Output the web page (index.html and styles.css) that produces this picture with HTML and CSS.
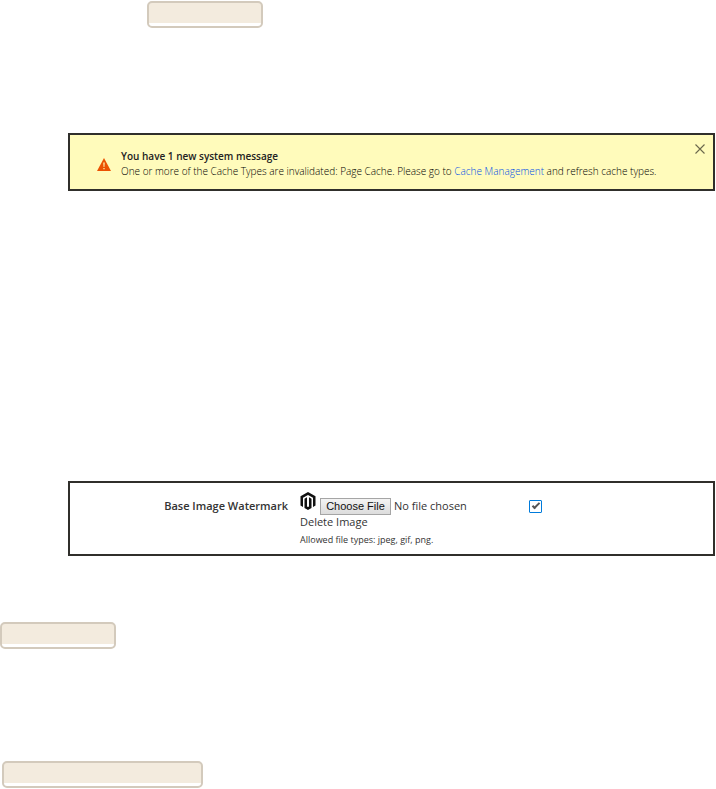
FILE: index.html
```html
<!DOCTYPE html>
<html lang="en">
<head>
	<meta charset="utf-8">
	<title>Base Image Watermark</title>
	<link rel="stylesheet" href="styles.css">
</head>
<body>
	<div class="tag tag-top"></div>

	<div class="panel message">
		<svg class="warning" viewBox="0 0 14 13">
			<path d="M7 0L14 13H0z" fill="#eb5202"/>
			<path d="M6.300 4.500h1.400l-.3 4.500h-.8zM6.400 10h1.200v1.200H6.400z" fill="#fffbbb"/>
		</svg>
		<div class="message-text">
			<strong>You have 1 new system message</strong>
			<p>One or more of the Cache Types are invalidated: Page Cache. Please go to <a href="#">Cache Management</a> and refresh cache types.</p>
		</div>
		<button class="close" type="button" aria-label="Close">
			<svg viewBox="0 0 10 10"><path d="M.5.5l9 9M9.500.5l-9 9" fill="none" stroke="#6b684c" stroke-width="1.100"/></svg>
		</button>
	</div>

	<form class="panel field">
		<label class="field-label" for="watermark">Base Image Watermark</label>
		<div class="control">
			<div class="upload">
				<svg class="logo" viewBox="0 0 16 18">
					<path d="M8 0l7.500 4.300v9.200l-2.500 1.400V5.800L8 2.900 3 5.800v9.100L.5 13.500V4.300z" fill="#111"/>
					<path d="M4.500 6.700L7 5.200v9.300l1 .6 1-.6V5.200l2.500 1.500v9.200L8 18l-3.500-2.100z" fill="#111"/>
				</svg>
				<input class="file" type="file" id="watermark">
				<input class="check" type="checkbox" id="delete" checked>
			</div>
			<label class="delete" for="delete">Delete Image</label>
			<p class="note">Allowed file types: jpeg, gif, png.</p>
		</div>
	</form>

	<div class="tag tag-middle"></div>
	<div class="tag tag-wide"></div>
</body>
</html>
```

FILE: styles.css
```css
body{
	margin: 0;
	padding: 1px 1px 1px 0;
	background: #fff;
	color: #333;
	font-family: "Open Sans", sans-serif;
	font-size: 10px;
}
p{
	margin: 0;
}

.tag{
	box-sizing: border-box;
	width: 116px;
	height: 27px;
	border: 2px solid #d3cabc;
	border-radius: 5px;
	background: linear-gradient(#f3ebde 20px, #fff 20px);
}
.tag-top{
	margin-left: 147px;
}
.tag-middle{
	margin-top: 66px;
}
.tag-wide{
	width: 201px;
	margin: 112px 0 0 2px;
}

.panel{
	box-sizing: border-box;
	margin-left: 68px;
	border: 2px solid #302f2b;
}

/* system message */
.message{
	display: flex;
	align-items: flex-start;
	min-height: 58px;
	margin-top: 105px;
	padding: 9px 8px 9px 27px;
	background: #fffbbb;
}
.warning{
	flex: none;
	width: 14px;
	height: 13px;
	margin: 14px 10px 0 0;
}
.message-text{
	flex: 1;
	padding-top: 5px;
	line-height: 15px;
}
.message-text strong{
	display: block;
	color: #222;
	font-weight: 600;
}
.message-text p{
	color: #000;
	font-weight: 300;
}
.message-text a{
	color: #0050e6;
	text-decoration: none;
}
.close{
	width: 10px;
	height: 10px;
	padding: 0;
	border: 0;
	background: none;
}
.close svg{
	display: block;
}

/* watermark field */
.field{
	display: grid;
	grid-template-columns: 218px 1fr;
	column-gap: 12px;
	min-height: 75px;
	margin-top: 290px;
	padding-top: 8px;
}
.field-label{
	padding-top: 7px;
	font-size: 11px;
	font-weight: 600;
	line-height: 15px;
	text-align: right;
}
.upload{
	display: flex;
	height: 23px;
}
.logo{
	width: 16px;
	height: 18px;
	margin: 1px 4px 0 0;
}
.file{
	width: 209px;
	height: 19px;
	margin-top: 5px;
	font: 11px/19px "Open Sans", sans-serif;
	color: #333;
}
.file::file-selector-button{
	box-sizing: border-box;
	width: 71px;
	height: 17px;
	margin: 0 3px 0 0;
	padding: 0;
	border: 1px solid #a5a5a5;
	border-radius: 0;
	background: linear-gradient(#f4f4f4, #dcdcdc);
	color: #111;
	font: 11px/15px "Liberation Sans", Arial, sans-serif;
}
.check{
	appearance: none;
	width: 13px;
	height: 13px;
	margin: 9px 0 0;
	border: 1px solid #007bdb;
	border-radius: 1px;
	background: #fff;
}
.check:checked::after{
	content: "";
	display: block;
	box-sizing: border-box;
	width: 4px;
	height: 8px;
	margin: 0 auto;
	border: solid #555;
	border-width: 0 2px 2px 0;
	transform: rotate(45deg);
}
.delete{
	display: block;
	font-size: 11px;
	line-height: 16px;
}
.note{
	padding-top: 2px;
	font-size: 9px;
	line-height: 15px;
}
```
